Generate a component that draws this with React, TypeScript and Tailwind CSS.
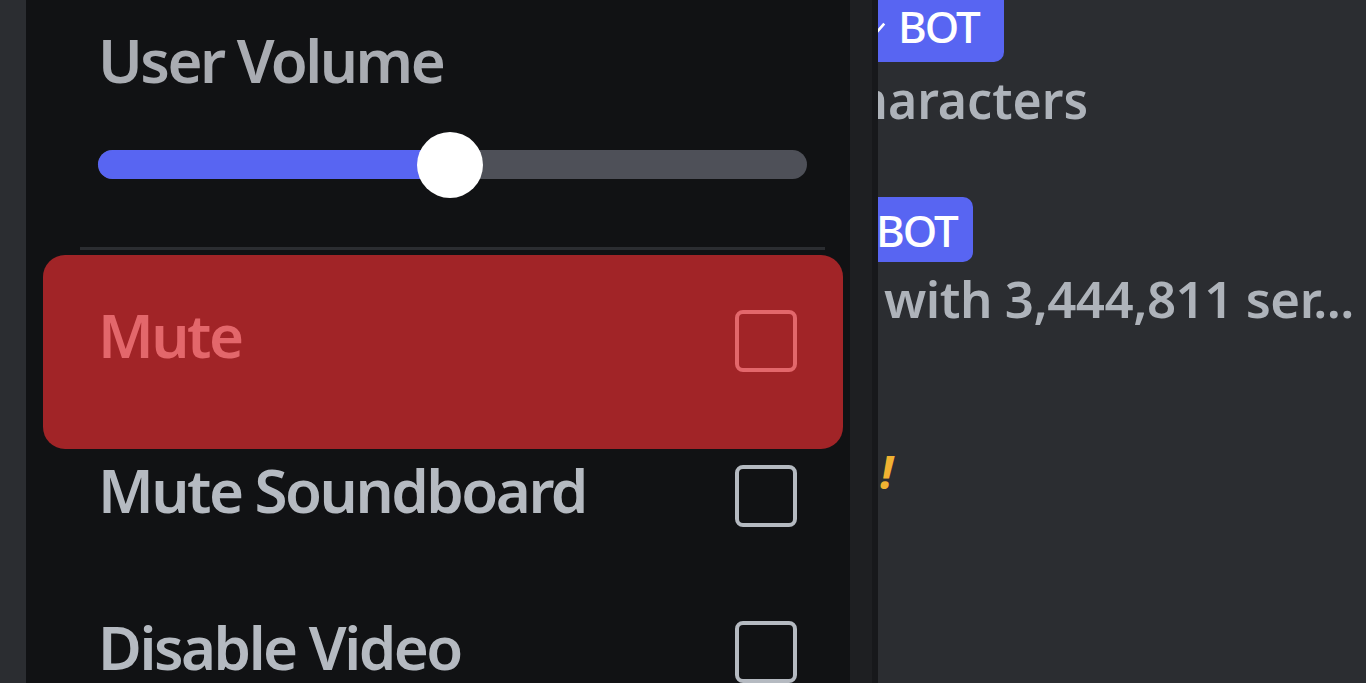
import React from "react";

const font = { fontFamily: '"Noto Sans", "Open Sans", sans-serif' };

function Box({ red = false }: { red?: boolean }) {
  return (
    <div
      className={
        "h-[62px] w-[62px] shrink-0 rounded-[8px] border-[4px] " +
        (red ? "border-[#e3676b]" : "border-[#b5bac1]")
      }
    />
  );
}

function Menu() {
  return (
    <div className="flex w-[824px] shrink-0 flex-col bg-[#111214]">
      <div className="shrink-0 pl-[72px] pt-[30px] text-[60px] font-semibold leading-[60px] tracking-[-2.5px] text-[#a9acb2]">
        User Volume
      </div>

      {/* slider */}
      <div className="relative ml-[72px] mt-[60px] h-[29px] w-[709px] shrink-0 rounded-full bg-[#4e5058]">
        <div className="h-full w-[352px] rounded-full bg-[#5865f2]" />
        <div className="absolute left-[319px] top-[-18px] h-[66px] w-[66px] rounded-full bg-white" />
      </div>

      <div className="ml-[54px] mr-[25px] mt-[68px] h-[3px] shrink-0 bg-[#2b2d31]" />

      <div className="ml-[17px] mt-[5px] flex h-[194px] w-[800px] shrink-0 items-start justify-between rounded-[22px] bg-[#a12427] pl-[55px] pr-[46px] pt-[50px]">
        <span className="text-[60px] font-semibold leading-[60px] tracking-[-2.5px] text-[#e3676b]">Mute</span>
        <div className="mt-[5px]">
          <Box red />
        </div>
      </div>

      <div className="mt-[11px] flex shrink-0 items-start justify-between pl-[72px] pr-[53px]">
        <span className="text-[60px] font-semibold leading-[60px] tracking-[-2.5px] text-[#b5bac1]">Mute Soundboard</span>
        <div className="mt-[5px]">
          <Box />
        </div>
      </div>

      <div className="mt-[90px] flex shrink-0 items-start justify-between pl-[72px] pr-[53px]">
        <span className="text-[60px] font-semibold leading-[60px] tracking-[-2.5px] text-[#b5bac1]">Disable Video</span>
        <div className="mt-[4px]">
          <Box />
        </div>
      </div>
    </div>
  );
}

function Chat() {
  return (
    <div className="flex min-w-0 flex-1 flex-col overflow-hidden bg-[#2b2d31]">
      <div className="-ml-[30px] -mt-[10px] flex h-[72px] w-[156px] shrink-0 items-center gap-[12px] rounded-[10px] bg-[#5865f2] pl-[24px]">
        <svg width="14" height="14" viewBox="0 0 16 16" className="mt-[4px]">
          <path d="M2 8l4 4 8-9" stroke="#fff" strokeWidth="3" fill="none" />
        </svg>
        <span className="text-[44px] font-medium leading-none tracking-[-2px] text-white">BOT</span>
      </div>

      <div className="-ml-[22px] mt-[10px] shrink-0 whitespace-nowrap text-[50px] font-semibold leading-[56px] tracking-[0px] text-[#aeb3ba]">
        haracters
      </div>

      <div className="-ml-[20px] mt-[69px] flex h-[65px] w-[115px] shrink-0 items-center rounded-[10px] bg-[#5865f2] pl-[18px]">
        <span className="text-[44px] font-medium leading-none tracking-[-2px] text-white">BOT</span>
      </div>

      <div className="ml-[6px] mt-[6px] shrink-0 whitespace-nowrap text-[51px] font-semibold leading-[60px] tracking-[-0.5px] text-[#aeb3ba]">
        with 3,444,811 ser...
      </div>

      <div className="ml-[2px] mt-[115px] shrink-0 whitespace-nowrap text-[46px] font-bold italic leading-[56px] text-[#f0b232]">
        !
      </div>
    </div>
  );
}

export default function App() {
  return (
    <div style={font} className="w-[1366px] bg-white">
      <div className="flex h-[683px] w-[1366px] overflow-hidden bg-[#2b2d31]">
        <div className="w-[26px] shrink-0 bg-[#2b2d31]" />
        <Menu />
        <div className="w-[22px] shrink-0 bg-[#1e1f22]" />
        <div className="w-[6px] shrink-0 bg-[#17181b]" />
        <Chat />
      </div>
      <div className="h-[11px] bg-white" />
    </div>
  );
}
